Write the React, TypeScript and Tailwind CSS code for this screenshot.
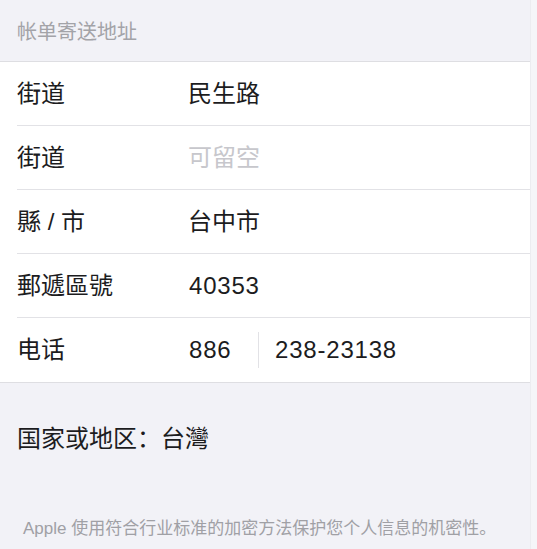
import React from "react";

const font = { fontFamily: '"Liberation Sans", "Noto Sans CJK SC", sans-serif' };

interface Row {
    label: string;
    value?: string;
    numeric?: boolean;
    placeholder?: string;
    phone?: { code: string; number: string };
}

const rows: Row[] = [
    { label: "街道", value: "民生路" },
    { label: "街道", placeholder: "可留空" },
    { label: "縣 / 市", value: "台中市" },
    { label: "郵遞區號", value: "40353", numeric: true },
    { label: "电话", phone: { code: "886", number: "238-23138" } }
];

export default function App() {
    return (
        <div style={font} className="w-[537px] h-[549px] overflow-hidden bg-[#f2f2f7] flex">
            <div className="w-[530px] flex flex-col">
                <div className="h-[61px] pl-[17px] flex items-center pt-[3px] text-[20px] text-[#a3a3a8]">
                    帐单寄送地址
                </div>

                <div className="bg-white border-y border-[#dedee2]">
                    {rows.map((row, i) => (
                        <div key={i} className="pl-[17px] flex">
                            <div
                                className={`flex-1 h-[64px] flex items-center text-[24px] text-[#1c1c1e] ${
                                    i < rows.length - 1 ? "border-b border-[#e2e2e6]" : ""
                                }`}
                            >
                                <div className="w-[172px]">{row.label}</div>
                                {row.value && (
                                    <div className={row.numeric ? "tracking-[0.8px]" : "-ml-px"}>{row.value}</div>
                                )}
                                {row.placeholder && <div className="-ml-px text-[#c7c7cc]">{row.placeholder}</div>}
                                {row.phone && (
                                    <div className="flex items-center tracking-[0.8px]">
                                        <span className="w-[69px]">{row.phone.code}</span>
                                        <span className="w-px h-[36px] bg-[#e2e2e6]"></span>
                                        <span className="pl-[16px]">{row.phone.number}</span>
                                    </div>
                                )}
                            </div>
                        </div>
                    ))}
                </div>

                <div className="h-[111px] pl-[17px] flex items-center text-[24px] text-[#1c1c1e]">
                    国家或地区：台灣
                </div>

                <div className="pl-[23px] pt-[22px] text-[17px] text-[#a0a0a5]">
                    Apple 使用符合行业标准的加密方法保护您个人信息的机密性。
                </div>
            </div>
            <div className="flex-1 bg-[#f5f5f8] border-l border-[#ececf0]"></div>
        </div>
    );
}
